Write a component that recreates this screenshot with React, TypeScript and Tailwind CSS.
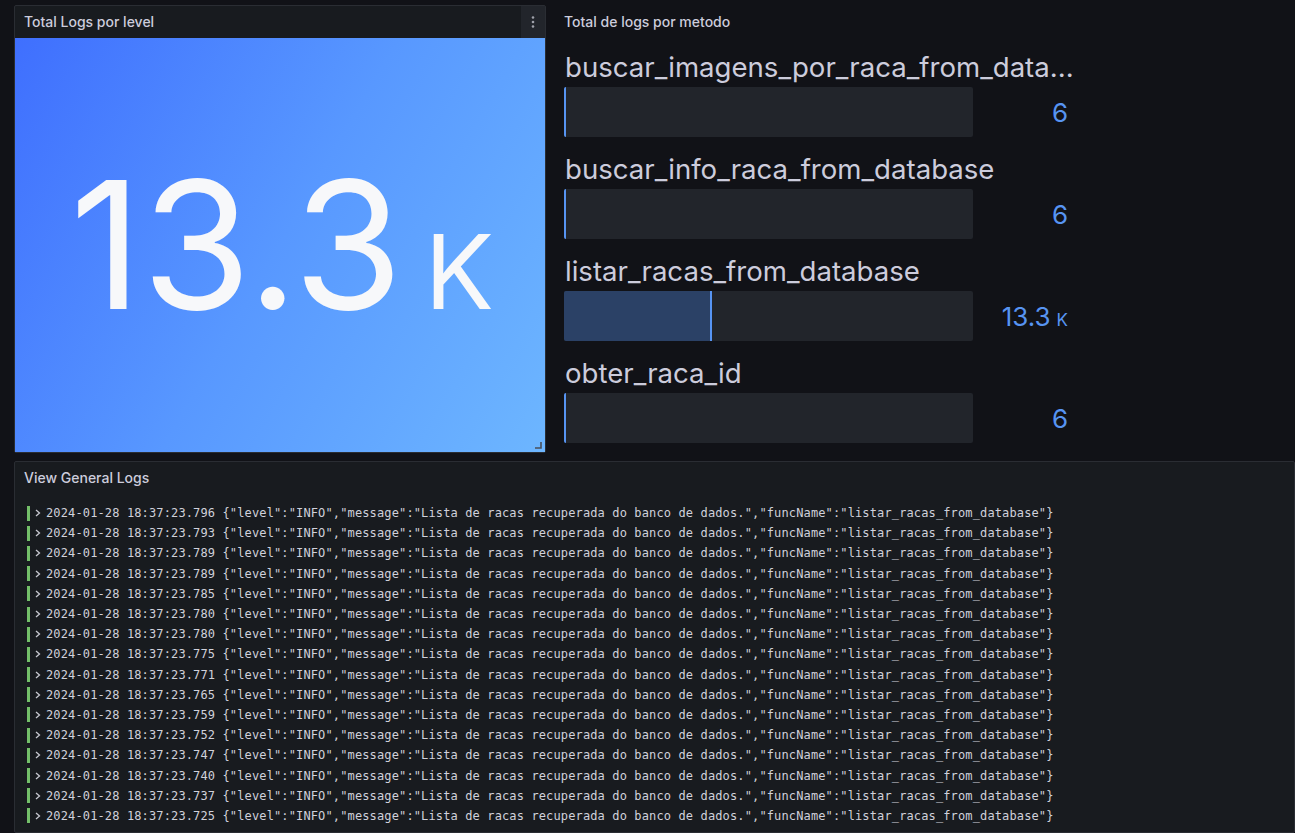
import React from "react";

const logs = ["796","793","789","789","785","780","780","775","771","765","759","752","747","740","737","725"];

const rows = [
  { label: "buscar_imagens_por_raca_from_data...", value: "6", suffix: "", fill: 0 },
  { label: "buscar_info_raca_from_database", value: "6", suffix: "", fill: 0 },
  { label: "listar_racas_from_database", value: "13.3", suffix: "K", fill: 147 },
  { label: "obter_raca_id", value: "6", suffix: "", fill: 0 },
];

export default function App() {
  return (
    <div className="w-[1295px] h-[833px] overflow-hidden bg-[#111217] pt-[5px] pl-[14px] flex flex-col gap-[8px] font-['Inter','Noto_Sans',sans-serif]">
      <div className="flex gap-[8px] h-[448px] shrink-0">
        {/* Panel 1 */}
        <div className="w-[532px] border border-[#2a2d33] bg-[#181b1f] rounded-[2px] flex flex-col">
          <div className="h-[32px] flex items-center justify-between pl-[9px] shrink-0">
            <span className="text-[14px] font-medium text-[#ccccdc] -mt-[1px]">Total Logs por level</span>
            <div className="w-[24px] h-full bg-[#22252b] flex items-center justify-center">
              <svg width="4" height="14" viewBox="0 0 4 14" fill="#9fa1aa">
                <circle cx="2" cy="2.5" r="1.3" />
                <circle cx="2" cy="7" r="1.3" />
                <circle cx="2" cy="11.5" r="1.3" />
              </svg>
            </div>
          </div>
          <div className="relative flex-1 flex items-center justify-center bg-[linear-gradient(120deg,#3f6ffe_0%,#5898ff_50%,#6db6ff_100%)]">
            <div className="flex items-baseline text-[#f7f8fa] leading-none pl-[4px]">
              <span className="text-[177px]">13.3</span>
              <span className="text-[103px] ml-[22px]">K</span>
            </div>
            <svg className="absolute right-[3px] bottom-[3px]" width="7" height="7" viewBox="0 0 7 7">
              <path d="M6 0 V6 H0" stroke="#4a4f5a" strokeWidth="1.6" fill="none" />
            </svg>
          </div>
        </div>
        {/* Panel 2 */}
        <div className="flex-1 flex flex-col">
          <div className="h-[33px] flex items-center pl-[10px] shrink-0">
            <span className="text-[14px] font-medium text-[#ccccdc]">Total de logs por metodo</span>
          </div>
          <div className="pl-[10px] pt-[13px] w-[523px] flex flex-col gap-[16px]">
            {rows.map((r) => (
              <div key={r.label} className="flex flex-col">
                <div className="h-[32px] leading-[32px] text-[27.6px] text-[#ccccdc] whitespace-nowrap pl-[1px]">{r.label}</div>
                <div className="mt-[4px] flex items-center h-[50px]">
                  <div className="relative w-[409px] h-[50px] bg-[#22252b] rounded-[2px] overflow-hidden flex">
                    {r.fill > 0 ? (
                      <div className="h-full bg-[#2b4166] border-r-[2px] border-[#5794f2]" style={{ width: r.fill + 1 }} />
                    ) : (
                      <div className="h-full w-[2px] bg-[#5794f2]" />
                    )}
                  </div>
                  <div className="flex-1 flex justify-end items-baseline pr-[9px] pt-[2px] text-[#5794f2] leading-none">
                    <span className="text-[26px]">{r.value}</span>
                    {r.suffix && <span className="text-[17px] ml-[6px]">{r.suffix}</span>}
                  </div>
                </div>
              </div>
            ))}
          </div>
        </div>
      </div>
      {/* Panel 3 */}
      <div className="flex-1 border border-[#2a2d33] bg-[#181b1f] rounded-[2px] flex flex-col">
        <div className="h-[32px] flex items-center pl-[9px] shrink-0">
          <span className="text-[14px] font-medium text-[#ccccdc] -mt-[1px]">View General Logs</span>
        </div>
        <div className="pl-[12px] pt-[9px] flex flex-col">
          {logs.map((ms, i) => (
            <div key={i} className="h-[20.2px] flex items-center">
              <div className="w-[3px] h-[15px] bg-[#73bf69]" />
              <svg className="ml-[5px]" width="6" height="8" viewBox="0 0 6 8">
                <path d="M1 1 L4.5 4 L1 7" stroke="#c7c8d0" strokeWidth="1.3" fill="none" />
              </svg>
              <span className="ml-[5px] whitespace-nowrap text-[12px] tracking-[0.13px] text-[#d0d1db] font-['DejaVu_Sans_Mono',monospace]">
                {`2024-01-28 18:37:23.${ms} {"level":"INFO","message":"Lista de racas recuperada do banco de dados.","funcName":"listar_racas_from_database"}`}
              </span>
            </div>
          ))}
        </div>
      </div>
    </div>
  );
}
